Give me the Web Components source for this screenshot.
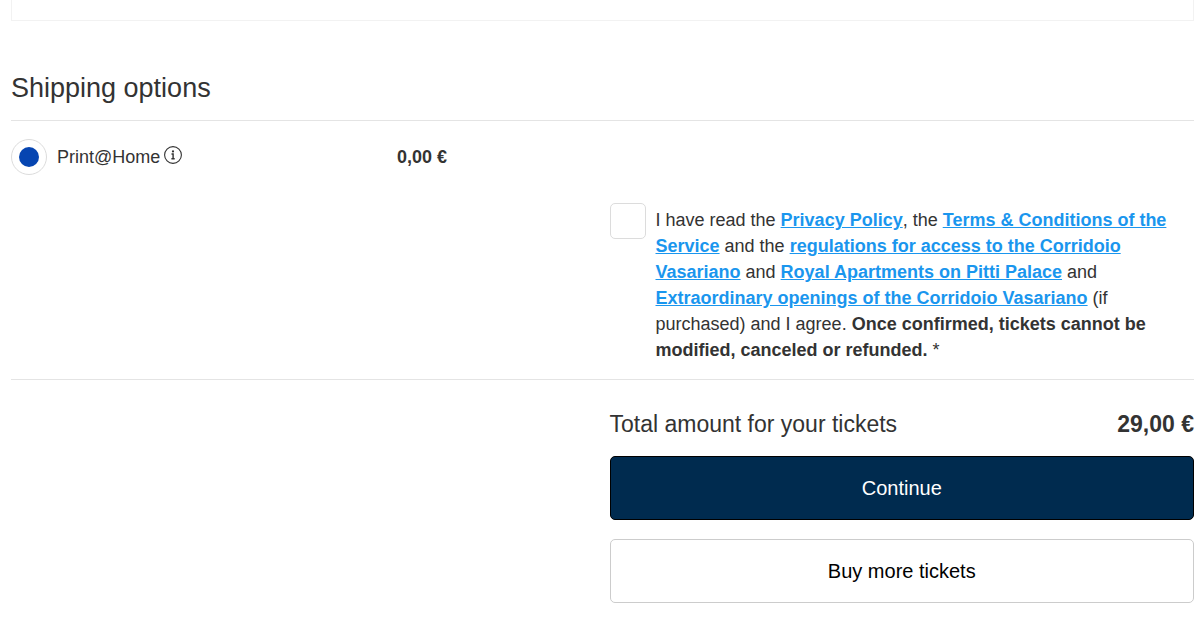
<!DOCTYPE html>
<html lang="en">
<head>
<meta charset="utf-8">
<meta name="viewport" content="width=device-width, initial-scale=1">
<title>Shipping options</title>
<style>
    body {
        margin: 0;
        background: #fff;
        color: #333;
        font-family: "Liberation Sans", Arial, sans-serif;
        font-size: 18px;
        line-height: 26px;
        --line: #e4e4e4;
        --control-border: #dcdcdc;
        --radio: #0645b1;
        --link: #1a96ee;
        --primary: #002b4f;
    }
</style>
</head>
<body>
<checkout-page>
    <shipping-section slot="shipping" heading="Shipping options">
        <shipping-option price="0,00 €">Print@Home</shipping-option>
    </shipping-section>
    <terms-check slot="terms">I have read the <a href="#privacy">Privacy Policy</a>, the <a href="#terms">Terms &amp; Conditions of the Service</a> and the <a href="#regulations">regulations for access to the Corridoio Vasariano</a> and <a href="#apartments">Royal Apartments on Pitti Palace</a> and <a href="#openings">Extraordinary openings of the Corridoio Vasariano</a> (if purchased) and I agree. <b>Once confirmed, tickets cannot be modified, canceled or refunded.</b> *</terms-check>
    <total-amount slot="summary" amount="29,00 €">Total amount for your tickets</total-amount>
    <action-button slot="summary" variant="primary">Continue</action-button>
    <action-button slot="summary">Buy more tickets</action-button>
</checkout-page>

<script>
// checkout-page: bottom of the previous card, then the sections
class CheckoutPage extends HTMLElement {
    constructor() {
        super();
        this.attachShadow({ mode: 'open' });
        this.shadowRoot.innerHTML = `
            <style>
                :host {
                    display: block;
                    padding: 0 6px 28px 11px;
                }
                .card-end {
                    height: 20px;
                    border: 1px solid #f2f2f2;
                    border-top: 0;
                }
                .half {
                    display: grid;
                    grid-template-columns: 1fr 1fr;
                    column-gap: 14px;
                }
                .col {
                    grid-column: 2;
                }
                .terms {
                    padding: 28px 0 16px;
                    border-bottom: 1px solid var(--line);
                }
                .summary {
                    display: flex;
                    flex-direction: column;
                    gap: 19px;
                    padding-top: 31px;
                }
            </style>
            <div class="card-end"></div>
            <slot name="shipping"></slot>
            <div class="half terms">
                <div class="col"><slot name="terms"></slot></div>
            </div>
            <div class="half">
                <div class="col summary"><slot name="summary"></slot></div>
            </div>
        `;
    }
}
customElements.define('checkout-page', CheckoutPage);

class ShippingSection extends HTMLElement {
    constructor() {
        super();
        this.attachShadow({ mode: 'open' });
        this.shadowRoot.innerHTML = `
            <style>
                :host {
                    display: block;
                    padding-top: 50px;
                }
                h2 {
                    margin: 0 0 18px;
                    padding-bottom: 15px;
                    border-bottom: 1px solid var(--line);
                    font-size: 27px;
                    font-weight: normal;
                    line-height: 34px;
                }
            </style>
            <h2></h2>
            <slot></slot>
        `;
    }

    connectedCallback() {
        this.shadowRoot.querySelector('h2').textContent = this.getAttribute('heading');
    }
}
customElements.define('shipping-section', ShippingSection);

class InfoIcon extends HTMLElement {
    constructor() {
        super();
        this.attachShadow({ mode: 'open' });
        this.shadowRoot.innerHTML = `
            <style>
                :host {
                    display: block;
                }
                svg {
                    display: block;
                }
            </style>
            <svg width="18" height="18" viewBox="0 0 18 18" aria-hidden="true">
                <circle cx="9" cy="9" r="8.4" fill="none" stroke="#333" stroke-width="1.1"/>
                <circle cx="9" cy="5.4" r="1.1" fill="#333"/>
                <path d="M7.5 8H9.1V12.6M7.4 12.7H10.7" fill="none" stroke="#333" stroke-width="1.4"/>
            </svg>
        `;
    }
}
customElements.define('info-icon', InfoIcon);

class ShippingOption extends HTMLElement {
    constructor() {
        super();
        this.attachShadow({ mode: 'open' });
        this.shadowRoot.innerHTML = `
            <style>
                :host {
                    display: grid;
                    grid-template-columns: 386px 1fr;
                    align-items: center;
                }
                .choice {
                    display: flex;
                    align-items: center;
                }
                input {
                    appearance: none;
                    box-sizing: border-box;
                    width: 36px;
                    height: 36px;
                    margin: 0 10px 0 0;
                    padding: 7px;
                    border: 1px solid var(--control-border);
                    border-radius: 50%;
                }
                input:checked::before {
                    content: "";
                    display: block;
                    width: 20px;
                    height: 20px;
                    border-radius: 50%;
                    background: var(--radio);
                }
                info-icon {
                    margin: 0 0 4px 4px;
                }
            </style>
            <div class="choice">
                <input type="radio" id="option" name="shipping" checked>
                <label for="option"><slot></slot></label>
                <info-icon></info-icon>
            </div>
            <b class="price"></b>
        `;
    }

    connectedCallback() {
        this.shadowRoot.querySelector('.price').textContent = this.getAttribute('price');
    }
}
customElements.define('shipping-option', ShippingOption);

class TermsCheck extends HTMLElement {
    constructor() {
        super();
        this.attachShadow({ mode: 'open' });
        this.shadowRoot.innerHTML = `
            <style>
                :host {
                    display: flex;
                    align-items: flex-start;
                    gap: 10px;
                }
                input {
                    appearance: none;
                    box-sizing: border-box;
                    flex: none;
                    width: 36px;
                    height: 36px;
                    margin: 0;
                    border: 1px solid var(--control-border);
                    border-radius: 5px;
                }
                input:checked {
                    background: var(--radio);
                }
                label {
                    padding-top: 4px;
                }
                ::slotted(a) {
                    color: var(--link);
                    font-weight: bold;
                    text-decoration: underline;
                }
            </style>
            <input type="checkbox" id="agree">
            <label for="agree"><slot></slot></label>
        `;
    }
}
customElements.define('terms-check', TermsCheck);

class TotalAmount extends HTMLElement {
    constructor() {
        super();
        this.attachShadow({ mode: 'open' });
        this.shadowRoot.innerHTML = `
            <style>
                :host {
                    display: flex;
                    justify-content: space-between;
                    font-size: 23px;
                }
            </style>
            <span><slot></slot></span>
            <b class="amount"></b>
        `;
    }

    connectedCallback() {
        this.shadowRoot.querySelector('.amount').textContent = this.getAttribute('amount');
    }
}
customElements.define('total-amount', TotalAmount);

class ActionButton extends HTMLElement {
    constructor() {
        super();
        this.attachShadow({ mode: 'open' });
        this.shadowRoot.innerHTML = `
            <style>
                :host {
                    display: block;
                }
                button {
                    display: block;
                    width: 100%;
                    padding: 18px;
                    border: 1px solid #ccc;
                    border-radius: 5px;
                    background: #fff;
                    color: #000;
                    font-family: inherit;
                    font-size: 20px;
                    line-height: 26px;
                    cursor: pointer;
                }
                :host([variant="primary"]) button {
                    border-color: #000;
                    background: var(--primary);
                    color: #fff;
                }
            </style>
            <button type="button"><slot></slot></button>
        `;
    }
}
customElements.define('action-button', ActionButton);
</script>
</body>
</html>
